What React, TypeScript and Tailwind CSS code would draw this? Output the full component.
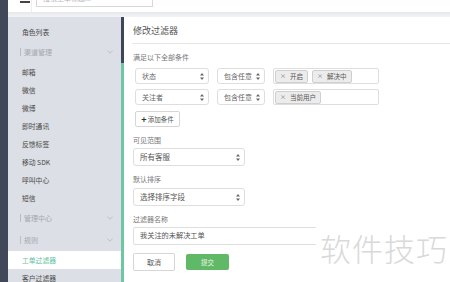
import React from 'react';

const sideItems: { label: string; type: 'item' | 'group' | 'active' }[] = [
  { label: '角色列表', type: 'item' },
  { label: '渠道管理', type: 'group' },
  { label: '邮箱', type: 'item' },
  { label: '微信', type: 'item' },
  { label: '微博', type: 'item' },
  { label: '即时通讯', type: 'item' },
  { label: '反馈标签', type: 'item' },
  { label: '移动 SDK', type: 'item' },
  { label: '呼叫中心', type: 'item' },
  { label: '短信', type: 'item' },
  { label: '管理中心', type: 'group' },
  { label: '规则', type: 'group' },
  { label: '工单过滤器', type: 'active' },
  { label: '客户过滤器', type: 'item' },
];

const UpDown = () => (
  <svg width="4" height="7" viewBox="0 0 4 7" className="fill-[#666] shrink-0">
    <path d="M2 0 L4 2.6 H0 Z M2 7 L0 4.4 H4 Z" />
  </svg>
);

const Chevron = () => (
  <svg width="6" height="4" viewBox="0 0 6 4" className="stroke-[#b4b8c0] fill-none">
    <path d="M0.5 0.8 L3 3.2 L5.5 0.8" strokeWidth="0.8" />
  </svg>
);

const Select: React.FC<{ label: string; className: string }> = ({ label, className }) => (
  <div className={`flex items-center justify-between border border-[#dedede] rounded-[3px] bg-white pl-[6px] pr-[4px] text-[#666] ${className}`}>
    <span>{label}</span>
    <UpDown />
  </div>
);

const Tag: React.FC<{ label: string }> = ({ label }) => (
  <div className="h-[13px] flex items-center gap-[4px] px-[4px] bg-[#ececec] border border-[#cfcfcf] rounded-[2px] text-[6.5px] text-[#555]">
    <span className="text-[6px] text-[#777]">×</span>
    <span>{label}</span>
  </div>
);

export default function App() {
  return (
    <div className="relative w-[450px] h-[282px] overflow-hidden flex bg-white font-['Noto_Sans_CJK_SC','Noto_Sans',sans-serif] leading-none">
      {/* dark left strip */}
      <div className="w-[8px] h-full bg-[#414859] shrink-0" />

      <div className="flex-1 flex flex-col min-w-0">
        {/* top bar, mostly scrolled off */}
        <div className="h-[12px] shrink-0 flex items-start overflow-hidden bg-white">
          <div className="w-[22px] mt-[-8px] flex flex-col items-end shrink-0">
            <div className="w-[10px] h-[1.5px] bg-[#444] mb-[3px]" />
            <div className="w-[10px] h-[1.5px] bg-[#444] mb-[3px]" />
            <div className="w-[10px] h-[1.5px] bg-[#444]" />
          </div>
          <div className="w-px h-full bg-[#eeeeee] ml-[1px]" />
          <div className="ml-[4px] mt-[-11px] w-[117px] h-[18px] border border-[#d8d8d8] flex items-center pl-[6px] text-[7px] text-[#b5b5b5] shrink-0">
            搜索工单标题...
          </div>
        </div>
        <div className="h-[5px] shrink-0 bg-gradient-to-b from-[#e6e8ec] to-[#f2f3f5]" />

        <div className="flex-1 flex min-h-0">
          {/* sidebar */}
          <div className="w-[113px] shrink-0 bg-[#dcdfe5] pt-[6px] flex flex-col">
            {sideItems.map((it) =>
              it.type === 'group' ? (
                <div key={it.label} className="h-[22px] shrink-0 flex items-center pl-[12px] pr-[8px]">
                  <div className="w-px h-[8px] bg-[#b9bdc5]" />
                  <span className="ml-[3px] text-[7px] text-[#a3a7b0] flex-1">{it.label}</span>
                  <Chevron />
                </div>
              ) : (
                <div
                  key={it.label}
                  className={`h-[18px] shrink-0 flex items-center pl-[14px] text-[6.8px] ${
                    it.type === 'active' ? 'bg-white text-[#63c29f]' : 'text-[#4a4a4a]'
                  }`}
                >
                  {it.label}
                </div>
              )
            )}
          </div>

          {/* accent bar */}
          <div className="w-[3px] shrink-0 flex flex-col">
            <div className="h-[46px] bg-[#3e4659]" />
            <div className="flex-1 bg-[#6fc6a3]" />
          </div>

          {/* main form */}
          <div className="flex-1 flex flex-col bg-white pl-[8px] text-[7px] text-[#777]">
            <div className="h-[26px] shrink-0 pl-[1px] pt-[9px] text-[9px] text-[#555]">修改过滤器</div>
            <div className="h-px bg-[#e8e8e8] shrink-0" />

            <div className="mt-[8px] pl-[1px] h-[10px] flex items-center">满足以下全部条件</div>

            <div className="mt-[6px] pl-[3px] flex flex-col gap-[5px]">
              <div className="h-[16px] flex gap-[8px]">
                <Select label="状态" className="w-[74px]" />
                <Select label="包含任意" className="w-[48px]" />
                <div className="w-[106px] border border-[#dedede] rounded-[2px] flex items-center gap-[4px] pl-[1px]">
                  <Tag label="开启" />
                  <Tag label="解决中" />
                </div>
              </div>
              <div className="h-[16px] flex gap-[8px]">
                <Select label="关注者" className="w-[74px]" />
                <Select label="包含任意" className="w-[48px]" />
                <div className="w-[106px] border border-[#dedede] rounded-[2px] flex items-center pl-[1px]">
                  <Tag label="当前用户" />
                </div>
              </div>
            </div>

            <div className="mt-[6px] ml-[3px] w-[45px] h-[16px] border border-[#d6d6d6] rounded-[2px] flex items-center justify-center gap-[1px] text-[6.5px] text-[#555]">
              <span className="text-[9px] font-bold text-[#333] leading-none">+</span>
              <span>添加条件</span>
            </div>

            <div className="mt-[8px] pl-[1px] h-[10px] flex items-center">可见范围</div>
            <Select label="所有客服" className="mt-[3px] ml-[1px] w-[112px] h-[18px] text-[7.5px] !text-[#555]" />

            <div className="mt-[8px] pl-[1px] h-[10px] flex items-center">默认排序</div>
            <Select label="选择排序字段" className="mt-[4px] ml-[1px] w-[112px] h-[18px] text-[7.5px] !text-[#555]" />

            <div className="mt-[8px] pl-[1px] h-[10px] flex items-center">过滤器名称</div>
            <div className="mt-[3px] ml-[1px] w-[310px] h-[18px] border border-[#dedede] rounded-[2px] flex items-center pl-[6px] text-[7.2px] text-[#555]">
              我关注的未解决工单
            </div>

            <div className="mt-[8px] ml-[1px] flex items-start">
              <div className="w-[42px] h-[18px] border border-[#d6d6d6] rounded-[2px] flex items-center justify-center text-[7px] text-[#555]">
                取消
              </div>
              <div className="ml-[11px] mt-[1px] w-[43px] h-[16px] bg-[#60b966] rounded-[2px] flex items-center justify-center text-[6.5px] text-[#e8f5e8]">
                提交
              </div>
            </div>
          </div>
        </div>
      </div>

      {/* watermark */}
      <div className="absolute left-[316px] top-[225px] h-[44px] w-[134px] bg-white flex items-center pl-[4px] text-[31px] text-[#d9d9d9] font-light tracking-[1px]">
        软件技巧
      </div>
    </div>
  );
}
